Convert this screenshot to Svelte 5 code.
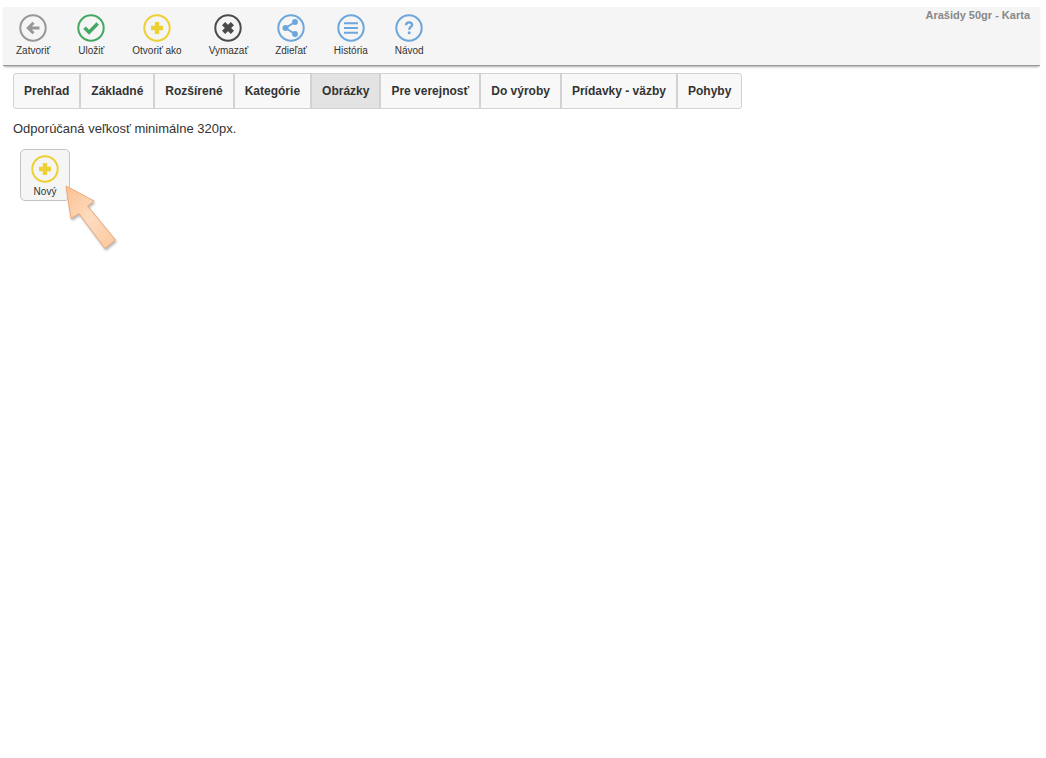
<script>
  const actions = [
    { id: 'back', label: 'Zatvoriť', color: '#979797' },
    { id: 'check', label: 'Uložiť', color: '#43a861' },
    { id: 'plus', label: 'Otvoriť ako', color: '#edd032' },
    { id: 'cross', label: 'Vymazať', color: '#4b4b4b' },
    { id: 'share', label: 'Zdieľať', color: '#6ca6da' },
    { id: 'list', label: 'História', color: '#6ca6da' },
    { id: 'help', label: 'Návod', color: '#6ca6da' },
  ];

  const tabs = [
    'Prehľad',
    'Základné',
    'Rozšírené',
    'Kategórie',
    'Obrázky',
    'Pre verejnosť',
    'Do výroby',
    'Prídavky - väzby',
    'Pohyby',
  ];

  let active = $state('Obrázky');
</script>

{#snippet icon(id, color)}
  <svg class="icon" viewBox="0 0 28 28" style:color={color} aria-hidden="true">
    <circle cx="14" cy="14" r="12.7" fill="none" stroke="currentColor" stroke-width="2" />
    {#if id === 'back'}
      <path d="M20.5 14H9.5M14.5 8.8L9.3 14l5.2 5.2" fill="none" stroke="currentColor" stroke-width="3" />
    {:else if id === 'check'}
      <path d="M7.5 13.7l4.6 4.6 8.6-8.8" fill="none" stroke="currentColor" stroke-width="3.4" />
    {:else if id === 'plus'}
      <path d="M14 8v12M8 14h12" fill="none" stroke="currentColor" stroke-width="4.4" />
    {:else if id === 'cross'}
      <path d="M9.6 9.6l8.8 8.8M18.4 9.6l-8.8 8.8" fill="none" stroke="currentColor" stroke-width="4.4" />
    {:else if id === 'share'}
      <path d="M18 8L8.5 14l9.5 6" fill="none" stroke="currentColor" stroke-width="1.8" />
      <circle cx="8.5" cy="14" r="3" fill="currentColor" />
      <circle cx="18" cy="8" r="2.9" fill="currentColor" />
      <circle cx="18" cy="20" r="2.9" fill="currentColor" />
    {:else if id === 'list'}
      <path d="M7 9.2h14M7 14h14M7 18.8h14" fill="none" stroke="currentColor" stroke-width="2" />
    {:else if id === 'help'}
      <path d="M11 11.2c.2-3.6 6.1-3.7 6.1-.4 0 2.2-2.9 2.2-2.9 5" fill="none" stroke="currentColor" stroke-width="2.4" />
      <circle cx="14.2" cy="18.7" r="1.5" fill="currentColor" />
    {/if}
  </svg>
{/snippet}

<div class="page">
  <header>
    <div class="actions">
      {#each actions as action}
        <button class="action">
          {@render icon(action.id, action.color)}
          <span>{action.label}</span>
        </button>
      {/each}
    </div>
    <h1>Arašidy 50gr - Karta</h1>
  </header>

  <main>
    <nav class="tabs">
      {#each tabs as tab}
        <button class:active={tab === active} onclick={() => (active = tab)}>{tab}</button>
      {/each}
    </nav>

    <p>Odporúčaná veľkosť minimálne 320px.</p>

    <div class="images">
      <button class="action new">
        {@render icon('plus', '#edd032')}
        <span>Nový</span>
      </button>
      <svg class="pointer" viewBox="0 0 60 72" aria-hidden="true">
        <defs>
          <linearGradient id="peach" x1="0" y1="0" x2="1" y2="1">
            <stop offset="0" stop-color="#fbc090" />
            <stop offset="0.5" stop-color="#fddcc0" />
            <stop offset="1" stop-color="#fbc79b" />
          </linearGradient>
        </defs>
        <path d="M4 4L32 19L25.5 24L53.5 58L43 66.5L17 31.5L9 36.5z" fill="url(#peach)" stroke="#eda878" stroke-width="1" />
      </svg>
    </div>
  </main>
</div>

<style>
  :global(body) {
    background: #fff;
    color: #333;
    font-family: "Liberation Sans", Arial, sans-serif;
  }
  .page {
    box-sizing: border-box;
    min-height: 100vh;
    padding: 7px 6px 0 3px;
  }
  button {
    font-family: inherit;
    color: inherit;
    cursor: pointer;
  }
  header {
    display: flex;
    justify-content: space-between;
    align-items: flex-start;
    padding-bottom: 8px;
    background: #f5f5f5;
    border-bottom: 1px solid #999;
    box-shadow: 0 2px 2px -1px #aaa;
  }
  .actions {
    display: flex;
    gap: 27px;
    padding: 7px 0 0 13px;
  }
  .action {
    display: flex;
    flex-direction: column;
    align-items: center;
    gap: 3px;
    padding: 0;
    border: none;
    background: none;
    font-size: 10px;
    line-height: 12px;
    white-space: nowrap;
  }
  .icon {
    display: block;
    width: 28px;
    height: 28px;
  }
  h1 {
    margin: 1px 10px 0 0;
    font-size: 11px;
    line-height: 14px;
    color: #888;
  }
  main {
    padding: 7px 10px;
  }
  .tabs {
    display: flex;
  }
  .tabs button {
    height: 36px;
    padding: 0 10px;
    border: 1px solid #d2d2d2;
    background: #f8f8f8;
    font-size: 12px;
    font-weight: bold;
    white-space: nowrap;
  }
  .tabs button:first-child {
    border-radius: 3px 0 0 3px;
  }
  .tabs button:last-child {
    border-radius: 0 3px 3px 0;
  }
  .tabs .active {
    background: #e3e3e3;
  }
  p {
    margin: 12px 0;
    font-size: 13px;
    line-height: 16px;
  }
  .images {
    position: relative;
    padding-left: 7px;
  }
  .new {
    width: 50px;
    height: 52px;
    padding-top: 5px;
    border: 1px solid #c4c4c4;
    border-radius: 5px;
    background: #f5f5f5;
    justify-content: flex-start;
  }
  .pointer {
    position: absolute;
    left: 49px;
    top: 33px;
    width: 60px;
    height: 72px;
    filter: drop-shadow(1px 2px 1px #bbb);
  }
</style>
